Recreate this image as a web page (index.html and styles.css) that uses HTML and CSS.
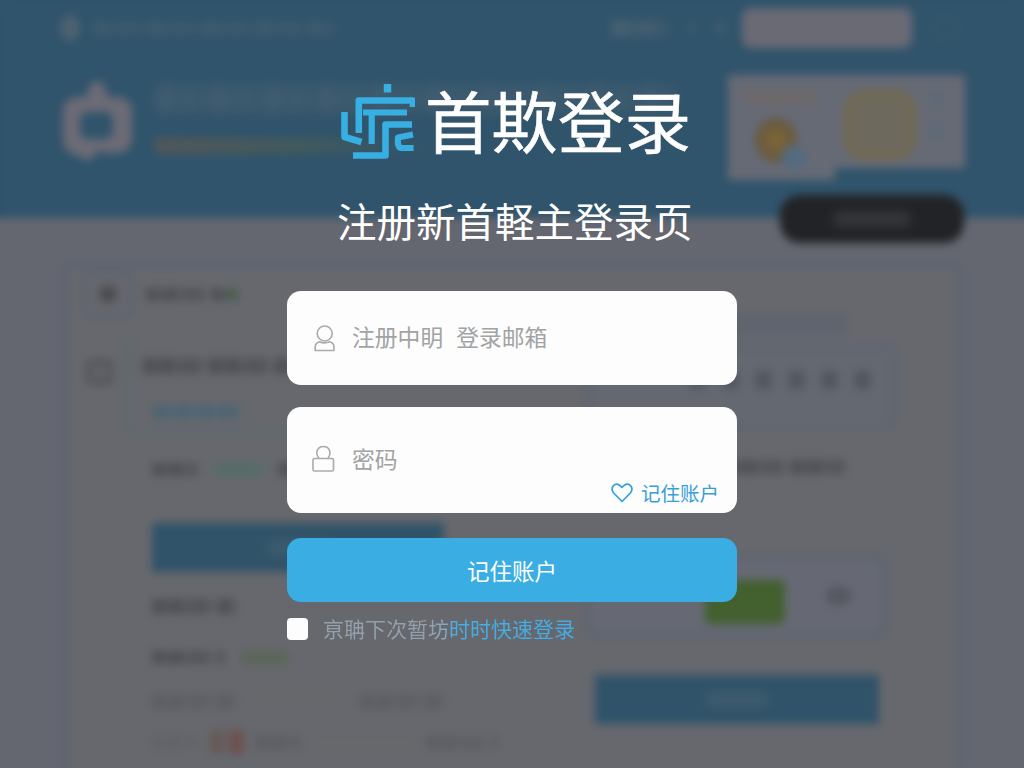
FILE: index.html
```html
<!DOCTYPE html>
<html lang="zh-CN">
<head>
<meta charset="utf-8">
<title>登录</title>
<link rel="stylesheet" href="styles.css">
</head>
<body>
<div class="stage">
  <div class="backdrop" aria-hidden="true">
    <header class="bg-header">
      <div class="bg-topbar">
        <i class="blob person"></i><i class="smudge pale crumbs"></i>
        <i class="smudge pale nav"></i><i class="blob dot"></i><i class="blob dot two"></i>
        <i class="search"></i><i class="ring"></i>
      </div>
      <div class="bg-hero">
        <svg class="bot" viewBox="0 0 76 90"><path d="M28 18 33 7H43L48 18V22H59Q73 24 73 37V63Q72 77 59 78H48L40 76 29 86 17 80Q4 76 4 64V37Q4 24 18 22H28Z" fill="#6c6b76"/><rect x="21" y="37" width="33" height="27" rx="8" fill="#30546b"/></svg>
        <div class="bg-copy"><i class="smudge pale headline"></i><i class="rule"></i></div>
        <div class="bg-card first"><i class="smudge amber caption"></i><i class="coin"><i class="gem"></i></i></div>
        <div class="bg-card second"><i class="tile"></i><i class="lines"></i></div>
      </div>
    </header>
    <div class="bg-pill"><i class="smudge light"></i></div>
    <main class="bg-panel">
      <section class="bg-left">
        <div class="row lead"><i class="avatar"></i><i class="smudge name"></i><i class="blob green-dot"></i></div>
        <div class="row second-row"><i class="box"></i><div class="quote"><i class="smudge wide"></i><i class="smudge blue"></i></div></div>
        <div class="bg-body">
          <div class="row tags"><i class="smudge s45"></i><i class="smudge mint s45"></i><i class="smudge s45"></i></div>
          <div class="bar"><i class="smudge light"></i></div>
          <i class="smudge s85"></i>
          <div class="row status"><i class="smudge s70"></i><i class="smudge olive s45"></i></div>
          <div class="row form"><i class="smudge soft s85"></i><i class="line"></i><i class="smudge soft s85"></i></div>
          <div class="row form last"><i class="smudge faint s45"></i><i class="red"></i><i class="smudge soft s45"></i><i class="line"></i><i class="smudge soft s70"></i></div>
        </div>
      </section>
      <section class="bg-right">
        <i class="strip"></i>
        <div class="icons"><i class="smudge spaced"></i></div>
        <i class="smudge sub"></i>
        <div class="action"><i class="go"></i><i class="blob cup"></i></div>
        <div class="bar"><i class="smudge light"></i></div>
      </section>
    </main>
  </div>

  <main class="login">
    <div class="brand">
      <svg class="logo" viewBox="0 0 74 78" fill="none" stroke="#38afe2" stroke-width="6.6" stroke-linejoin="round">
        <path d="M46.500 1V9.500" stroke-width="7.5"/>
        <path d="M72 24V17.500H17.800V50"/>
        <path d="M3.500 29V54L20.500 59"/>
        <path d="M22 29.500H66M30.700 31V61" stroke-width="6.2"/>
        <path d="M71 41.500H44.500V72.500H12"/>
        <path d="M72 51.500 57 54.500Q56 64 60 65H72.500" stroke-width="6.2"/>
      </svg>
      <h1>首欺登录</h1>
    </div>
    <h2>注册新首軽主登录页</h2>
    <form class="form-stack">
      <label class="field">
        <svg class="icon" viewBox="0 0 24 30"><circle cx="12.700" cy="10.500" r="7.500"/><path d="M7.500 18.800Q3.200 20 3.200 24V27.500H22V24Q22 20 17.800 18.800Q12.500 21 7.500 18.800Z"/></svg>
        <span class="first-hint">注册中眀</span><span>登录邮箱</span>
      </label>
      <label class="field password">
        <svg class="icon lock" viewBox="0 0 24 30"><path d="M8 14C3.500 9 6.500 2.500 12.500 2.500S21 9 17 14"/><rect x="2" y="14.500" width="20.500" height="12.500" rx="1.500"/></svg>
        <span>密码</span>
        <span class="remember"><svg class="heart" viewBox="0 0 24 22"><path d="M12 19.500 3.600 11C-.5 5.500 5 0 9.500 3.200L12 5.300 14.500 3.200C19 0 24.500 5.500 20.400 11Z"/></svg>记住账户</span>
      </label>
      <button class="submit" type="button">记住账户</button>
      <label class="check"><span class="checkbox"></span><span class="check-text">亰聃下次暂坊时时快速登录</span></label>
    </form>
  </main>
</div>
</body>
</html>
```

FILE: styles.css
```css
* { box-sizing: border-box; }
body {
  margin: 0;
  font-family: "Noto Sans CJK SC", "Noto Sans", sans-serif;
}
i { display: block; flex: none; }
svg { display: block; flex: none; }
.stage { display: grid; width: 1024px; height: 768px; overflow: hidden; background: linear-gradient(#30546b 214px, #646770 222px); }
.backdrop, .login { grid-area: 1 / 1; min-width: 0; }

/* Blurred page behind the dialog */
.backdrop { height: 768px; overflow: hidden; filter: blur(4.5px); background: #646770; }
.bg-header { height: 218px; background: #30546b; }
.bg-topbar { height: 56px; display: flex; align-items: center; padding-left: 60px; }
.smudge {
  height: 13px;
  opacity: .6;
  filter: blur(1.5px);
  background: repeating-linear-gradient(90deg, #3f4046 0 12px, #55575d 12px 16px, #414248 16px 31px, #55575d 31px 36px, #494a50 36px 58px, #5f6167 58px 66px);
}
.pale { background: repeating-linear-gradient(90deg, #68707c 0 18px, #506573 18px 24px, #5d6a76 24px 46px, #46606f 46px 54px); }
.light { background: #707780; opacity: .25; filter: blur(3px); }
.amber { background: #76695c; }
.blob { border-radius: 50%; background: #4c4d53; }
.person { width: 20px; height: 26px; background: #5e6874; opacity: .65; }
.crumbs { width: 243px; margin-left: 13px; opacity: .25; }
.nav { width: 56px; margin-left: 275px; height: 17px; opacity: .4; }
.dot { width: 8px; height: 16px; margin-left: 20px; background: #4b6172; opacity: .4; }
.two { width: 16px; margin-left: 18px; }
.search { width: 170px; height: 40px; margin-left: 13px; border-radius: 9px; background: #696a74; }
.ring { width: 28px; height: 28px; margin-left: 20px; border: 4px solid #48606f; border-radius: 50%; opacity: .4; }
.bg-hero { display: flex; align-items: flex-start; padding: 19px 0 0 59px; }
.bot { width: 76px; height: 90px; }
.bg-copy { width: 573px; margin-left: 20px; padding-top: 10px; }
.headline { width: 520px; height: 28px; opacity: .3; filter: blur(4px); }
.rule { width: 280px; height: 16px; margin-top: 25px; background: linear-gradient(90deg, #52575a, #425a5c 50%, #30546b); }
.bg-card { background: #666a75; }
.first { width: 107px; height: 105px; padding: 17px 17px 0; }
.caption { width: 72px; height: 12px; opacity: .5; }
.coin { width: 42px; height: 44px; margin: 14px 0 0 10px; padding: 27px 0 0 27px; border-radius: 50%; background: radial-gradient(#7f6935, #655741 70%); }
.gem { width: 24px; height: 24px; border-radius: 50%; background: #536b80; }
.second { width: 130px; height: 93px; padding: 15px 0 0 9px; display: flex; gap: 12px; }
.tile { width: 72px; height: 70px; border: 6px solid #736950; border-radius: 20px; background: #6d695c; }
.lines { width: 17px; height: 50px; margin-top: 5px; background: repeating-linear-gradient(#566b7a 0 9px, #646975 9px 30px); opacity: .6; }
.bg-pill { position: relative; display: flex; justify-content: center; align-items: center; width: 184px; height: 48px; margin: -23px 0 0 780px; border-radius: 20px; background: #222326; }
.bg-pill .smudge { width: 76px; height: 14px; opacity: .25; }
.bg-panel { display: flex; width: 906px; height: 560px; margin: 18px 0 0 60px; border: 8px solid #5f6470; border-radius: 12px; background: #66686d; }
.bg-left { width: 500px; flex: none; padding: 8px 0 0 14px; }
.row { display: flex; align-items: center; }
.lead { height: 46px; margin-top: -6px; }
.avatar { width: 52px; height: 50px; border: 5px solid #5e6470; border-radius: 10px; background: radial-gradient(circle, #46484c 0 5px, #65676d 11px); }
.name { width: 80px; margin-left: 12px; }
.green-dot { width: 13px; height: 13px; background: #4b5d4c; }
.second-row { align-items: flex-start; margin-top: 24px; }
.box { width: 29px; height: 28px; margin: 17px 0 0 3px; border: 7px solid #57595e; border-radius: 7px; background: #606268; }
.quote { height: 94px; width: 360px; margin-left: 12px; padding: 17px 0 0 12px; border: solid #5f6570; border-width: 0 0 5px 5px; }
.wide { width: 170px; height: 16px; }
.blue { width: 86px; height: 13px; margin: 31px 0 0 10px; background: repeating-linear-gradient(90deg, #3b6176 0 16px, #4b6a7b 16px 22px); }
.bg-body { padding: 28px 0 0 70px; }
.s45 { width: 46px; }
.s70 { width: 72px; }
.s85 { width: 84px; height: 15px; }
.tags { gap: 17px; }
.mint { background: #4b7065; }
.bar { display: flex; align-items: center; justify-content: center; background: #305369; }
.bg-left .bar { width: 292px; height: 49px; margin: 47px 0 27px; }
.bar .smudge { width: 62px; }
.status { gap: 18px; margin-top: 37px; }
.olive { background: #58654f; opacity: .7; }
.form { gap: 12px; margin-top: 30px; }
.form .line { width: 100px; height: 3px; background: #6b6a68; }
.soft { opacity: .25; }
.faint { opacity: .12; }
.form.last { margin-top: 21px; }
.red { width: 34px; height: 24px; background: linear-gradient(90deg, #655750 30%, #64646a 50%, #704a46 65%); opacity: .8; }
.bg-right { width: 312px; flex: none; padding: 44px 0 0; margin-left: 17px; }
.strip { height: 24px; width: 262px; background: #60646e; }
.icons { height: 86px; margin-top: 7px; padding: 20px 0 0 98px; border: 7px solid #5f6571; border-radius: 8px; background: #646870; }
.spaced { width: 180px; height: 18px; background: repeating-linear-gradient(90deg, #464a52 0 15px, transparent 15px 33px); }
.sub { width: 120px; height: 14px; margin: 30px 0 0 140px; }
.action { display: flex; align-items: center; gap: 40px; height: 84px; margin-top: 80px; padding-left: 114px; width: 302px; border: 6px solid #5e6470; border-radius: 5px; background: #666974; }
.go { width: 80px; height: 44px; margin-top: 12px; border-radius: 5px; background: #43602f; }
.cup { width: 27px; height: 20px; opacity: .6; }
.bg-right .bar { width: 284px; height: 49px; margin: 37px 0 0 10px; }

/* Sign-in content */
.login { position: relative; width: 450px; margin-left: 287px; padding-top: 83px; }
.brand { display: flex; align-items: flex-start; height: 78px; padding-left: 54px; }
.logo { width: 74px; height: 78px; }
h1, h2 { margin: 0; color: #fff; white-space: nowrap; font-weight: 400; }
h1 { margin: 0 0 0 10px; font-size: 66.500px; line-height: 72px; -webkit-text-stroke: .6px #fff; }
h2 { margin: 34px 0 0 50px; font-size: 39.500px; line-height: 50px; }
.form-stack { margin-top: 46px; }
.field { display: flex; align-items: center; height: 94px; padding-left: 25px; border-radius: 14px; background: #fdfdfe; color: #a2a3a3; font-size: 22.800px; line-height: 30px; font-weight: 400; }
.field > span:not(.remember) { margin-top: -2px; }
.icon { width: 24px; height: 30px; margin-right: 16px; fill: none; stroke: #aaa; stroke-width: 1.6; stroke-linejoin: round; }
.lock { margin: -2px 17px 0 -1px; }
.first-hint { margin-right: 13px; }
.password { position: relative; height: 106px; margin-top: 22px; }
.remember { position: absolute; right: 18px; bottom: 5px; display: flex; align-items: center; color: #3c9dd6; font-size: 19.500px; }
.heart { width: 24px; height: 22px; margin-right: 7px; fill: none; stroke: #34a0da; stroke-width: 1.7; stroke-linejoin: round; }
.submit { display: block; width: 100%; height: 64px; margin-top: 25px; padding: 0; border: 0; border-radius: 14px; background: #3aaee2; color: #fff; font: 400 22.500px/64px "Noto Sans CJK SC", sans-serif; }
.check { display: flex; align-items: center; height: 30px; margin-top: 12px; }
.checkbox { width: 21px; height: 22px; border-radius: 4px; background: #fdfdfe; }
.check-text { margin: -2px 0 0 15px; font-size: 21px; line-height: 30px; font-weight: 400; white-space: nowrap; color: transparent; background: linear-gradient(90deg, #94a1ac 0 40%, #86a9c2 49%, #44aee7 52%); background-clip: text; -webkit-background-clip: text; }
```
